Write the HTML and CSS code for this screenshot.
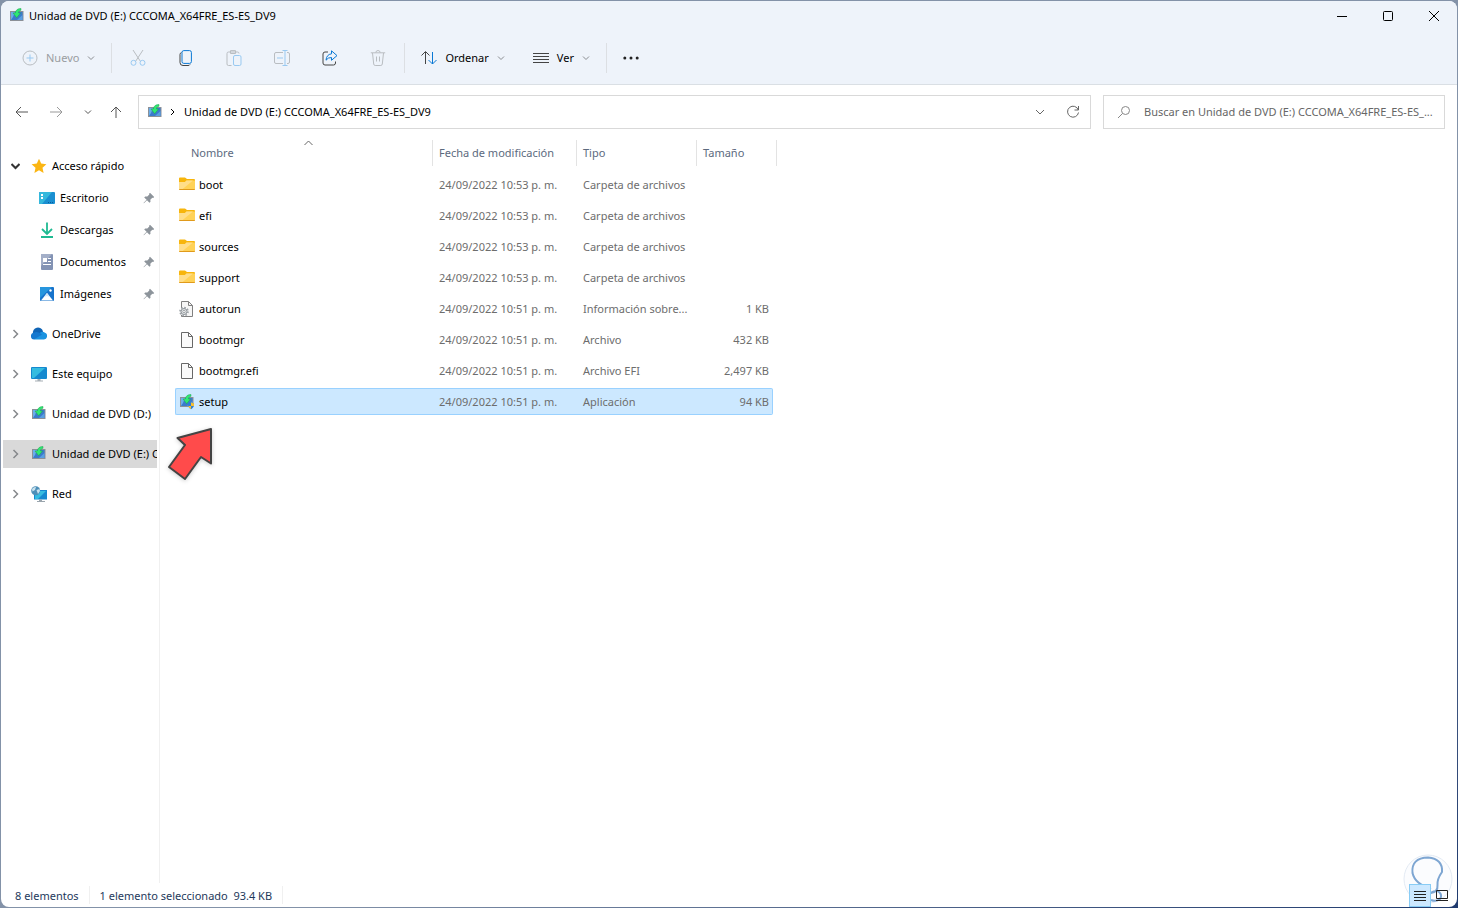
FILE: index.html
```html
<!DOCTYPE html>
<html lang="es">
<head>
  <meta charset="UTF-8" />
  <meta name="viewport" content="width=device-width, initial-scale=1.0"/>
  <title>Unidad de DVD (E:) CCCOMA_X64FRE_ES-ES_DV9</title>
  <link rel="stylesheet" href="styles.css">
</head>
<body>
  <!-- Shared icons -->
  <svg class="sprite" aria-hidden="true">
    <symbol id="i-dvd" viewBox="0 0 16 16">
      <path fill="#8b9097" d="M1 3h13.500v10H1z"/>
      <path fill="#3a7bcb" d="M2 4h11.500v8H2z"/>
      <path fill="#6aaeea" d="M2 4h4l-2 5-2 3z"/>
      <path fill="#5a9fe2" d="M13.500 7v5H8z"/>
      <path fill="#2fe874" stroke="#1da34b" stroke-width=".5" d="M12 .5C8.500.5 6.500 2.300 6.300 5H4l3.700 4.700L11.500 5h-2c0-1.500.7-2.400 2.500-2.700z"/>
    </symbol>
    <symbol id="i-down" viewBox="0 0 8 8">
      <path fill="none" stroke="currentColor" d="M1 2.500l3 3 3-3"/>
    </symbol>
    <symbol id="i-right" viewBox="0 0 9 10">
      <path fill="none" stroke="currentColor" stroke-width="1.500" d="M2.500 1l4 4-4 4"/>
    </symbol>
    <symbol id="i-pin" viewBox="0 0 12 12">
      <path fill="#8d949b" d="M7 .8L11.200 5l-1 .9-.9-.2-2 2 .2 2-1 1L4 8.200.9 11.300.5 10.900 3.600 7.800 1.200 5.400l1-1 2.100.2 2-2-.2-.9z"/>
    </symbol>
    <symbol id="i-folder" viewBox="0 0 16 16">
      <path fill="#f7b50c" d="M0 1.500Q0 .5 1 .5h5l2 1.500h7q1 0 1 1V6H0z"/>
      <path fill="#ffd258" d="M0 5h6l1.500-1.500H16V12q0 1-1 1H1q-1 0-1-1z"/>
      <path fill="#ffde8a" d="M0 5h6l1.500-1.500H14L3 12.500H0z"/>
      <path fill="#e09a1c" d="M0 12h16q0 1-1 1H1q-1 0-1-1z"/>
    </symbol>
    <symbol id="i-file" viewBox="0 0 16 16">
      <path fill="#fafafa" stroke="#686868" d="M2.500.5h7l4 4v11h-11z"/>
      <path fill="none" stroke="#686868" d="M9.500.5v4h4"/>
    </symbol>
  </svg>

  <div class="window">
    <header>
      <div class="titlebar">
        <svg class="icon"><use href="#i-dvd"/></svg>
        <h1>Unidad de DVD (E:) CCCOMA_X64FRE_ES-ES_DV9</h1>
        <div class="controls">
          <button type="button" aria-label="Minimizar"><svg width="10" height="10"><path d="M0 5.500h10"/></svg></button>
          <button type="button" aria-label="Maximizar"><svg width="10" height="10"><rect x=".5" y=".5" width="9" height="9" rx="1"/></svg></button>
          <button type="button" aria-label="Cerrar"><svg width="10" height="10"><path d="M0 0l10 10M10 0L0 10"/></svg></button>
        </div>
      </div>

      <div class="toolbar">
        <button type="button" class="tool" disabled>
          <svg width="16" height="16"><circle class="ln" cx="8" cy="8" r="7"/><path class="bl" d="M8 4.500v7M4.500 8h7"/></svg>
          <span>Nuevo</span>
          <svg class="chev"><use href="#i-down"/></svg>
        </button>
        <span class="sep"></span>
        <button type="button" class="tool-icon" aria-label="Cortar" disabled>
          <svg width="16" height="16"><path class="ln" d="M3 0l7.200 11M13 0L5.800 11"/><circle class="bl" cx="3.500" cy="12.800" r="2.500"/><circle class="bl" cx="12.500" cy="12.800" r="2.500"/></svg>
        </button>
        <button type="button" class="tool-icon" aria-label="Copiar">
          <svg width="16" height="16"><path class="ln" d="M3.500 2.500Q2 3 2 4.500v8Q2 15.500 5 15.500h5q1.500 0 2-1"/><rect class="bl" x="4" y=".6" width="9.400" height="12.800" rx="1.800"/></svg>
        </button>
        <button type="button" class="tool-icon" aria-label="Pegar" disabled>
          <svg width="16" height="16"><path class="ln" d="M5.500 15.500H2.500Q1 15.500 1 14V3.500Q1 2 2.500 2h9Q13 2 13 3.500M4.500 3.500V.6h5v2.900z"/><rect class="bl" x="7.500" y="5.500" width="7.500" height="10" rx="1.500"/></svg>
        </button>
        <button type="button" class="tool-icon" aria-label="Cambiar nombre" disabled>
          <svg width="16" height="16"><path class="ln" d="M9 2.500H2Q.5 2.500.5 4v8Q.5 13.500 2 13.500h7M13 2.500h1q1.500 0 1.500 1.500v8q0 1.500-1.500 1.500h-1"/><path class="bl" d="M11 .5v15M8.500.5h5M8.500 15.500h5M3 8h6"/></svg>
        </button>
        <button type="button" class="tool-icon" aria-label="Compartir">
          <svg width="16" height="16"><path class="ln" d="M6 2H3Q1 2 1 4v9q0 2 2 2h8.500q2 0 2-2v-1.500"/><path class="bl" d="M9.500.8L15 5.600l-5.500 4.700V7.500Q6 7.300 4 10.200 4.500 4.500 9.500 3.800z"/></svg>
        </button>
        <button type="button" class="tool-icon" aria-label="Eliminar" disabled>
          <svg width="16" height="16"><path class="ln" d="M.8 2.800h14.400M2.500 3l1.200 11q.2 1.500 1.500 1.500h5.600q1.300 0 1.500-1.500L13.500 3M5.800 2.500q.2-2 2.200-2t2.200 2M6.500 6.500v5M9.500 6.500v5"/></svg>
        </button>
        <span class="sep"></span>
        <button type="button" class="tool">
          <svg width="16" height="16"><path class="ln" d="M4.500 14V2M.5 5.500l4-4 4 4"/><path class="bl" d="M11.500 2v12M7.500 10l4 4 4-4"/></svg>
          <span>Ordenar</span>
          <svg class="chev"><use href="#i-down"/></svg>
        </button>
        <button type="button" class="tool">
          <svg width="16" height="16"><path class="ln" d="M0 3.500h16M0 6.500h16M0 9.500h16M0 12.500h16"/></svg>
          <span>Ver</span>
          <svg class="chev"><use href="#i-down"/></svg>
        </button>
        <span class="sep"></span>
        <button type="button" class="tool-icon more" aria-label="Ver más">
          <svg width="16" height="4"><g fill="#222"><circle cx="1.800" cy="2" r="1.500"/><circle cx="8" cy="2" r="1.500"/><circle cx="14.200" cy="2" r="1.500"/></g></svg>
        </button>
      </div>
    </header>

    <div class="navbar">
      <div class="history">
        <button type="button" aria-label="Atrás"><svg width="13" height="12"><path d="M13 6H1M6 1L1 6l5 5"/></svg></button>
        <button type="button" aria-label="Adelante" class="faded"><svg width="13" height="12"><path d="M0 6h12M7 1l5 5-5 5"/></svg></button>
        <button type="button" aria-label="Ubicaciones recientes" class="narrow"><svg width="8" height="8"><use href="#i-down"/></svg></button>
        <button type="button" aria-label="Subir" class="narrow"><svg width="12" height="12"><path d="M6 12V1M1 6l5-5 5 5"/></svg></button>
      </div>
      <div class="address">
        <svg class="icon"><use href="#i-dvd"/></svg>
        <svg class="crumb" width="6" height="8"><path d="M1 1l3 3-3 3"/></svg>
        <span>Unidad de DVD (E:) CCCOMA_X64FRE_ES-ES_DV9</span>
        <button type="button" aria-label="Ubicaciones anteriores"><svg width="10" height="8"><path d="M1 2l4 4 4-4"/></svg></button>
        <button type="button" aria-label="Actualizar"><svg width="14" height="14"><path d="M12.300 5A5.500 5.500 0 1 0 12.500 7.500M12.500 1v4h-4"/></svg></button>
      </div>
      <label class="search">
        <svg width="14" height="14"><circle cx="8.500" cy="5.500" r="4"/><path d="M5.500 8.500L1 13"/></svg>
        <input type="text" aria-label="Buscar" placeholder="Buscar en Unidad de DVD (E:) CCCOMA_X64FRE_ES-ES_..." />
      </label>
    </div>

    <div class="content">
      <nav>
        <a class="item" href="#">
          <svg class="arrow open" viewBox="0 0 9 10"><path d="M.5 3l4 4 4-4"/></svg>
          <svg class="icon" viewBox="0 0 16 16"><path fill="#fbb614" d="M8 .8l2.200 4.800 5.200.6-3.900 3.500 1.100 5.200L8 12.300l-4.600 2.600 1.100-5.200L.6 6.200l5.200-.6z"/></svg>
          <span>Acceso rápido</span>
        </a>
        <a class="item child" href="#">
          <svg class="icon" viewBox="0 0 16 16"><rect y="2" width="16" height="12" rx="1" fill="#1a8fd1"/><path fill="#35b8dc" d="M1 2h12L3 14H0V3z"/><path fill="#fff" d="M2 4h2v2H2zM2 7h2v2H2z"/><path stroke="#0b5a9c" stroke-dasharray="1 1" d="M9 12.500h6"/></svg>
          <span>Escritorio</span>
          <svg class="pin"><use href="#i-pin"/></svg>
        </a>
        <a class="item child" href="#">
          <svg class="icon" viewBox="0 0 16 16"><path fill="none" stroke="#1fba92" stroke-width="1.800" d="M8 .5v11M3 7l5 5 5-5M2 15h12"/></svg>
          <span>Descargas</span>
          <svg class="pin"><use href="#i-pin"/></svg>
        </a>
        <a class="item child" href="#">
          <svg class="icon" viewBox="0 0 16 16"><rect x="2" y="0" width="12" height="16" rx="1" fill="#8393b4"/><path fill="#a3afc8" d="M2 1q0-1 1-1h10L2 12z"/><path fill="#fff" d="M4 4h4v4H4z"/><path stroke="#fff" d="M9 4.500h3M9 7.500h3M4 10.500h8"/></svg>
          <span>Documentos</span>
          <svg class="pin"><use href="#i-pin"/></svg>
        </a>
        <a class="item child" href="#">
          <svg class="icon" viewBox="0 0 16 16"><rect x="1" y="1" width="14" height="14" rx="1" fill="#1773cb"/><path fill="#2796de" d="M1 1h12L1 12z"/><path fill="#fff" d="M2 14.500l6-7.500 6 7.500z"/><path fill="#cfe6f8" d="M5 11l3-4 3 4-3-1z"/><circle cx="11.500" cy="4.500" r="1.200" fill="#fff"/></svg>
          <span>Imágenes</span>
          <svg class="pin"><use href="#i-pin"/></svg>
        </a>
        <a class="item root" href="#">
          <svg class="arrow"><use href="#i-right"/></svg>
          <svg class="icon" viewBox="0 0 16 16"><path fill="#0f64b5" d="M2 8a5 5 0 0 1 10-2.500L8 13z"/><path fill="#1b93e0" d="M8 7.500q3-3 6-.7A3.500 3.500 0 0 1 13 13.500H3z"/><path fill="#1478cf" d="M2.500 6.800Q7 4.500 11 8.500l-8 5a3.400 3.400 0 0 1-.5-6.700z"/></svg>
          <span>OneDrive</span>
        </a>
        <a class="item root" href="#">
          <svg class="arrow"><use href="#i-right"/></svg>
          <svg class="icon" viewBox="0 0 16 16"><rect y="1" width="16" height="12" rx="1" fill="#1589cf"/><path fill="#35bce0" d="M1 2h13L3 12H1z"/><path fill="#a7afb5" d="M6.500 13h3v1.500H12v1H4v-1h2.500z"/></svg>
          <span>Este equipo</span>
        </a>
        <a class="item root" href="#">
          <svg class="arrow"><use href="#i-right"/></svg>
          <svg class="icon"><use href="#i-dvd"/></svg>
          <span>Unidad de DVD (D:)</span>
        </a>
        <a class="item root current" href="#">
          <svg class="arrow"><use href="#i-right"/></svg>
          <svg class="icon"><use href="#i-dvd"/></svg>
          <span>Unidad de DVD (E:) CCCOMA_X64FRE_ES-ES_DV9</span>
        </a>
        <a class="item root" href="#">
          <svg class="arrow"><use href="#i-right"/></svg>
          <svg class="icon" viewBox="0 0 16 16"><rect x="3" y="4" width="13" height="9.500" fill="#1589cf"/><path fill="#35bce0" d="M4 5h11l-8 8H4z"/><path fill="#9aa5ad" d="M8 13.500h3v1.500H14v1H6v-1h2z"/><circle cx="4.700" cy="4.700" r="4.500" fill="#4d8fb8"/><path fill="#c9e2ee" d="M1 3q2-2.500 4-2L4 4 1.500 5.500zM5.500 4l3-1 .5 2-2 3z"/></svg>
          <span>Red</span>
        </a>
      </nav>

      <main>
        <table>
          <thead>
            <tr>
              <th class="name" scope="col">Nombre
                <svg class="sort" width="9" height="6"><path d="M.5 5l4-4 4 4"/></svg>
              </th>
              <th class="date" scope="col">Fecha de modificación</th>
              <th class="type" scope="col">Tipo</th>
              <th class="size" scope="col">Tamaño</th>
            </tr>
          </thead>
          <tbody>
            <tr>
              <td><div class="file"><svg class="icon"><use href="#i-folder"/></svg>boot</div></td>
              <td>24/09/2022 10:53 p. m.</td>
              <td>Carpeta de archivos</td>
              <td></td>
            </tr>
            <tr>
              <td><div class="file"><svg class="icon"><use href="#i-folder"/></svg>efi</div></td>
              <td>24/09/2022 10:53 p. m.</td>
              <td>Carpeta de archivos</td>
              <td></td>
            </tr>
            <tr>
              <td><div class="file"><svg class="icon"><use href="#i-folder"/></svg>sources</div></td>
              <td>24/09/2022 10:53 p. m.</td>
              <td>Carpeta de archivos</td>
              <td></td>
            </tr>
            <tr>
              <td><div class="file"><svg class="icon"><use href="#i-folder"/></svg>support</div></td>
              <td>24/09/2022 10:53 p. m.</td>
              <td>Carpeta de archivos</td>
              <td></td>
            </tr>
            <tr>
              <td><div class="file"><svg class="icon" viewBox="0 0 16 16"><path fill="#f6f6f6" stroke="#808080" d="M2.500.5h7l4 4v11h-11z"/><path fill="none" stroke="#808080" d="M9.500.5v4h4"/><circle cx="5" cy="10.500" r="4" fill="#fff" stroke="#9aa0a5" stroke-width="1.600" stroke-dasharray="1.600 1.500"/><circle cx="5" cy="10.500" r="3" fill="#e4e6e8" stroke="#8b9196"/><circle cx="5" cy="10.500" r="1.200" fill="#fff" stroke="#8b9196" stroke-width=".8"/></svg>autorun</div></td>
              <td>24/09/2022 10:51 p. m.</td>
              <td>Información sobre...</td>
              <td>1 KB</td>
            </tr>
            <tr>
              <td><div class="file"><svg class="icon"><use href="#i-file"/></svg>bootmgr</div></td>
              <td>24/09/2022 10:51 p. m.</td>
              <td>Archivo</td>
              <td>432 KB</td>
            </tr>
            <tr>
              <td><div class="file"><svg class="icon"><use href="#i-file"/></svg>bootmgr.efi</div></td>
              <td>24/09/2022 10:51 p. m.</td>
              <td>Archivo EFI</td>
              <td>2,497 KB</td>
            </tr>
            <tr class="selected">
              <td><div class="file"><svg class="icon" viewBox="0 0 16 16"><use href="#i-dvd" width="16" height="16"/><path fill="#2b7fd6" d="M9 9.500l3-1 3 1q.2 4-3 5.800-3.200-1.800-3-5.800z"/><path fill="#fbc02d" d="M12 8.500l3 1V12h-3v3.300Q9.800 14 9.200 12H12z"/></svg>setup</div></td>
              <td>24/09/2022 10:51 p. m.</td>
              <td>Aplicación</td>
              <td>94 KB</td>
            </tr>
          </tbody>
        </table>
        <svg class="pointer" viewBox="0 0 46 54"><path d="M44 2L10.500 11l7.500 7L2 40l16 12 16-22 10 6.500z"/></svg>
      </main>
    </div>

    <footer>
      <span class="status">8 elementos</span>
      <span class="status">1 elemento seleccionado&nbsp; 93.4 KB</span>
      <div class="views">
        <button type="button" aria-label="Detalles" class="active"><svg width="12" height="11"><path d="M0 1.500h12M0 4.500h12M0 7.500h12M0 10.500h12"/></svg></button>
        <button type="button" aria-label="Iconos grandes"><svg width="12" height="11"><path d="M.5.500h11v8H.5zM0 10.500h12"/></svg></button>
      </div>
    </footer>

    <svg class="badge" viewBox="0 0 50 50">
      <circle class="disc" cx="25" cy="25" r="24"/>
      <path class="bulb" d="M28 35Q12 30 9.500 19 8 4 25 3.500 40 5 39 18 34 25 34.500 31 35 38 28 39q2-2 7-2 5 4 2 8-4 3-9 1"/>
    </svg>
  </div>
</body>
</html>
```
FILE: styles.css
```css
* {
  box-sizing: border-box;
}
body {
  margin: 0;
  padding: 1px;
  height: 100vh;
  font-family: 'Noto Sans', 'Open Sans', sans-serif;
  font-size: 11px;
  line-height: 16px;
  color: #000;
  background: linear-gradient(to bottom right, #8392a8 60%, #1f3a6e);
}
button {
  display: flex;
  align-items: center;
  justify-content: center;
  margin: 0;
  padding: 0;
  border: 0;
  background: none;
  font: inherit;
  color: inherit;
}
svg {
  flex: none;
}
.sprite {
  position: absolute;
  width: 0;
  height: 0;
}
.icon {
  width: 16px;
  height: 16px;
}
.window {
  position: relative;
  display: flex;
  flex-direction: column;
  height: 100%;
  background: #fff;
  border-radius: 8px;
  overflow: hidden;
}

header {
  background: #eef3fa;
  border-bottom: 1px solid #dadfe4;
}
.titlebar {
  display: flex;
  align-items: center;
  height: 30px;
  padding-left: 8px;
}
.titlebar h1 {
  flex: 1;
  margin: 0 0 0 4px;
  font-size: 11px;
  font-weight: 400;
}
.controls {
  display: flex;
}
.controls button {
  width: 46px;
  height: 30px;
}
.controls path,
.controls rect {
  fill: none;
  stroke: #000;
}

.toolbar {
  display: flex;
  align-items: center;
  height: 53px;
  padding-left: 7px;
}
.tool {
  height: 32px;
  padding: 0 14px;
  gap: 8px;
}
.tool-icon {
  width: 48px;
  height: 32px;
}
.tool-icon.more {
  width: 44px;
}
.toolbar .chev {
  width: 8px;
  height: 8px;
  color: #8a8d91;
}
.toolbar .ln {
  fill: none;
  stroke: #444;
}
.toolbar .bl {
  fill: none;
  stroke: #0a78d4;
}
.toolbar :disabled {
  color: #9a9da1;
}
.toolbar :disabled .ln {
  stroke: #b9bdc1;
}
.toolbar :disabled .bl {
  stroke: #99c9f1;
}
.sep {
  width: 1px;
  height: 30px;
  margin: 0 2px;
  background: #dcdfe3;
}

.navbar {
  display: flex;
  padding: 10px 12px 7px 0;
}
.history {
  display: flex;
  align-items: center;
  width: 137px;
  padding-left: 3px;
}
.history button {
  width: 35px;
  height: 34px;
  color: #555;
}
.history .narrow {
  width: 28px;
}
.history .faded {
  color: #999;
}
.navbar path,
.navbar circle {
  fill: none;
  stroke: currentColor;
}
.address {
  flex: 1;
  display: flex;
  align-items: center;
  height: 34px;
  padding: 0 1px 0 8px;
  border: 1px solid #d9d9d9;
}
.address .crumb {
  margin: 0 8px 0 7px;
}
.address span {
  flex: 1;
}
.address button {
  width: 33px;
  height: 32px;
  color: #666;
}
.search {
  display: flex;
  align-items: center;
  width: 342px;
  height: 34px;
  margin-left: 12px;
  padding-left: 13px;
  border: 1px solid #d9d9d9;
  color: #888;
}
.search input {
  flex: 1;
  min-width: 0;
  margin-left: 13px;
  padding: 0;
  border: 0;
  outline: 0;
  background: none;
  font: inherit;
}
.search input::placeholder {
  color: #666;
}

.content {
  flex: 1;
  display: flex;
  min-height: 0;
}
nav {
  width: 159px;
  margin-top: 4px;
  padding: 12px 2px 0;
  border-right: 1px solid #f0f0f0;
}
.item {
  display: flex;
  align-items: center;
  height: 28px;
  margin-bottom: 4px;
  padding-left: 8px;
  color: #000;
  text-decoration: none;
  white-space: nowrap;
  overflow: hidden;
}
.item span {
  margin-left: 5px;
}
.item.child {
  padding: 0 2px 0 36px;
}
.item.root {
  margin: 12px 0 0;
}
.item.current {
  background: #d9d9d9;
}
.arrow {
  width: 9px;
  height: 10px;
  margin-right: 11px;
  color: #85888b;
}
.arrow.open path {
  fill: none;
  stroke: #333;
  stroke-width: 2;
}
.pin {
  width: 12px;
  height: 12px;
  margin-left: auto;
}

main {
  position: relative;
  flex: 1;
  padding-left: 15px;
}
table {
  width: 598px;
  table-layout: fixed;
  border-collapse: separate;
  border-spacing: 0 4px;
  white-space: nowrap;
}
th {
  position: relative;
  height: 27px;
  padding: 0 0 2px 7px;
  font-weight: 400;
  text-align: left;
  color: #5c6a7e;
}
th::after {
  content: '';
  position: absolute;
  top: 0;
  right: -1px;
  width: 1px;
  height: 26px;
  background: #e3e3e3;
}
.name {
  width: 257px;
  padding-left: 16px;
}
.date {
  width: 144px;
}
.type {
  width: 120px;
}
.size::after {
  right: -4px;
}
.sort {
  position: absolute;
  top: 0;
  left: 50%;
}
.sort path {
  fill: none;
  stroke: #666;
}
td {
  height: 27px;
  padding: 0 0 0 7px;
  border: solid transparent;
  border-width: 1px 0;
  color: #6d6d6d;
}
td:first-child {
  padding-left: 3px;
  border-left-width: 1px;
  border-radius: 2px 0 0 2px;
  color: #000;
}
td:last-child {
  padding: 0 3px 0 0;
  border-right-width: 1px;
  border-radius: 0 2px 2px 0;
  text-align: right;
}
.file {
  display: flex;
  align-items: center;
  gap: 4px;
}
.selected td {
  background: #cce8ff;
  border-color: #99d1ff;
}
/* red arrow pointing at the installer */
.pointer {
  position: absolute;
  top: 291px;
  left: 7px;
  width: 46px;
  height: 54px;
  filter: drop-shadow(0 1px 2px rgba(0,0,0,0.2));
}
.pointer path {
  fill: #ff4b4b;
  stroke: #444;
  stroke-width: 2;
  stroke-linejoin: round;
}

footer {
  display: flex;
  align-items: center;
  height: 24px;
  padding: 0 4px;
  color: #1e395b;
}
.status {
  padding: 2px 10px 0;
  border-right: 1px solid #f0f0f0;
}
.views {
  display: flex;
  position: relative;
  z-index: 1;
  margin-left: auto;
}
.views button {
  width: 22px;
  height: 23px;
}
.views .active {
  background: #cce8ff;
  border: 1px solid #88ccf5;
}
.views path {
  fill: none;
  stroke: #222;
}
.badge {
  position: absolute;
  right: 4px;
  bottom: 3px;
  width: 50px;
  height: 50px;
}
.badge .disc {
  fill: #fbfcfe;
  stroke: #e3eaf3;
}
.badge .bulb {
  fill: none;
  stroke: #7ea6d2;
  stroke-width: 2;
}
```
